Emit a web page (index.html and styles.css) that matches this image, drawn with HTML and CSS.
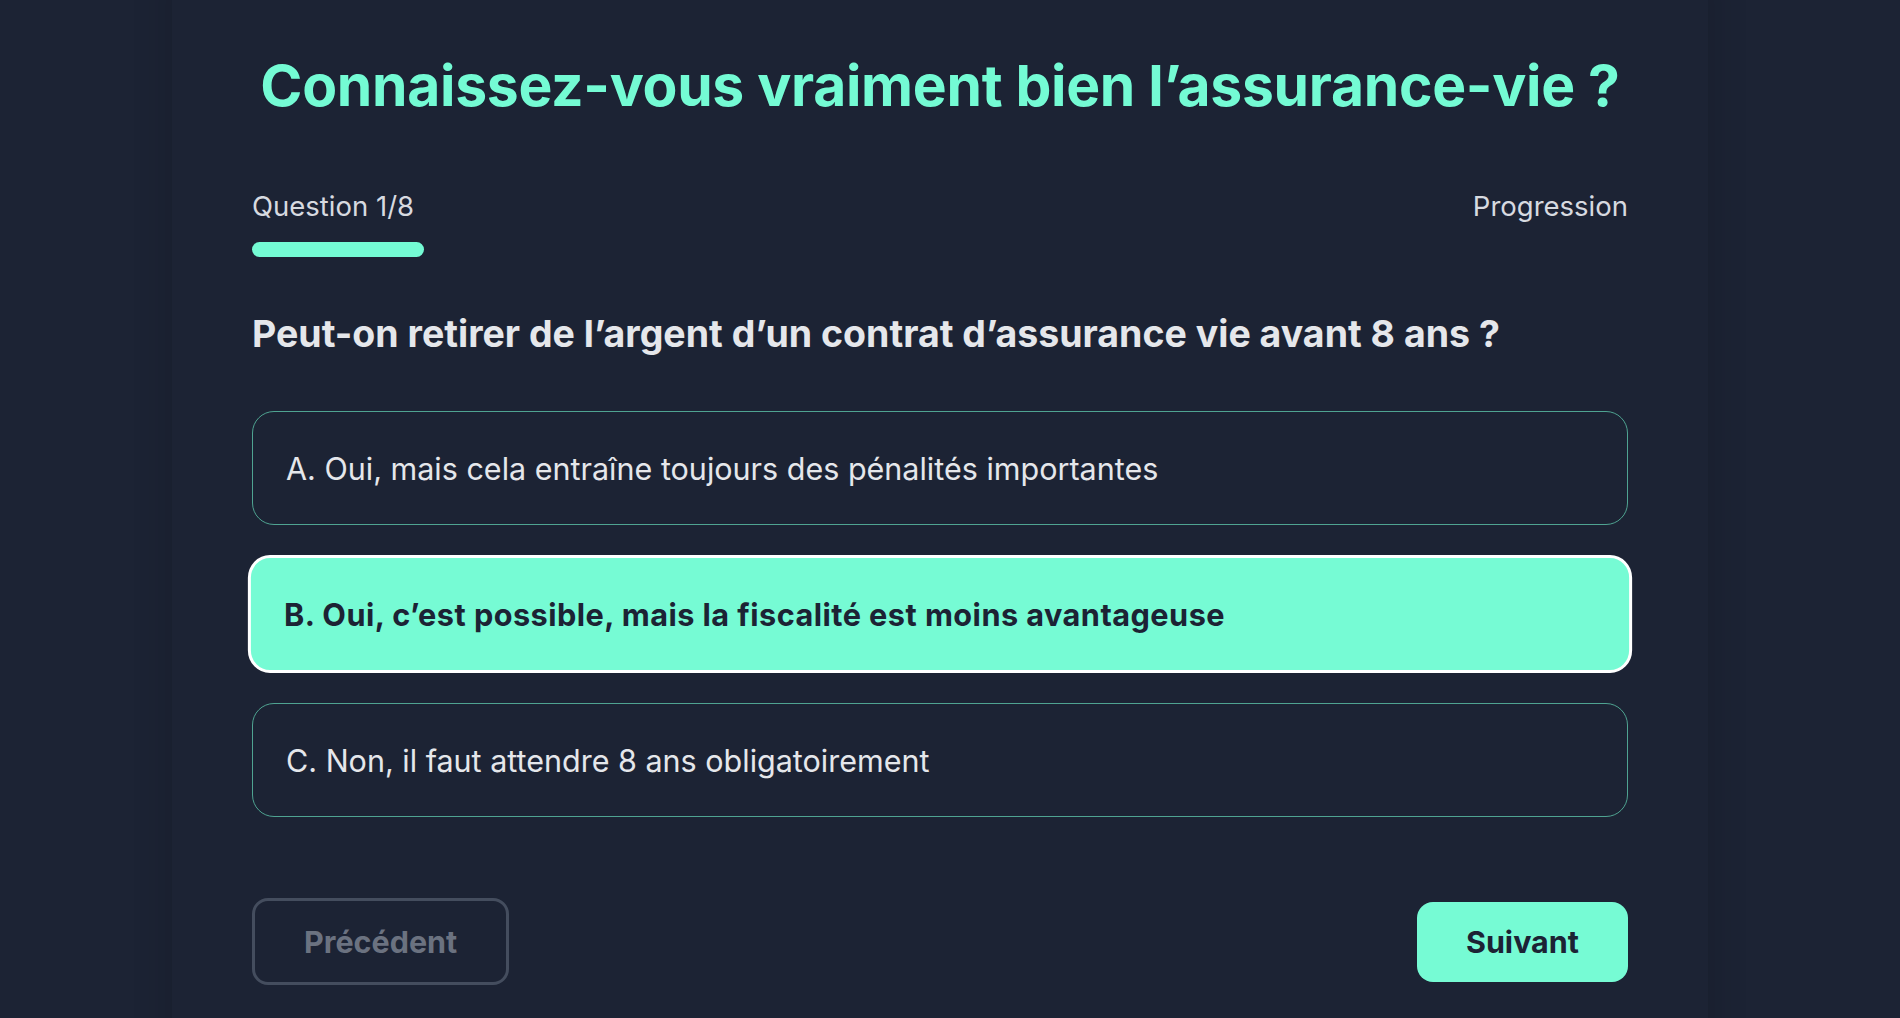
FILE: index.html
```html
<html>
  <head>
    <link rel="stylesheet" href="styles.css">
  </head>
  <body>
    <div class="card">
      <h1>Connaissez-vous vraiment bien l’assurance-vie ?</h1>
      <div class="progress">
        <div class="progress-head">
          <span>Question 1/8</span>
          <span>Progression</span>
        </div>
        <div class="track"><div class="fill" style="width: 12.5%"></div></div>
      </div>
      <h2>Peut-on retirer de l’argent d’un contrat d’assurance vie avant 8 ans ?</h2>
      <div class="options">
        <button class="option">A. Oui, mais cela entraîne toujours des pénalités importantes</button>
        <button class="option selected">B. Oui, c’est possible, mais la fiscalité est moins avantageuse</button>
        <button class="option">C. Non, il faut attendre 8 ans obligatoirement</button>
      </div>
      <div class="nav">
        <button class="prev" disabled>Précédent</button>
        <button class="next">Suivant</button>
      </div>
    </div>
  </body>
</html>
```

FILE: styles.css
```css
*{
  margin: 0;
  padding: 0;
  box-sizing: border-box;
}
body{
  background: #1c2334;
  color: #e5e7eb;
  font-family: Inter, "Noto Sans", sans-serif;
  height: 1018px;
  overflow: hidden;
}
.card{
  width: 1536px;
  margin: -40px 0 0 172px;
  padding: 91px 80px 0;
  height: 1200px;
  background: #1c2334;
  box-shadow: 0 0 40px rgba(0,0,0,0.16);
  border-radius: 24px;
}
h1{
  color: #74fbd4;
  font-size: 57px;
  font-weight: 700;
  line-height: 70px;
  text-align: center;
  letter-spacing: -0.3px;
}
.progress{
  margin-top: 68px;
}
.progress-head{
  display: flex;
  justify-content: space-between;
  font-size: 27.5px;
  line-height: 34px;
  color: #d7dae0;
}
.track{
  margin-top: 19px;
  height: 15px;
  border-radius: 8px;
}
.fill{
  height: 100%;
  background: #74fbd4;
  border-radius: 8px;
}
h2{
  margin-top: 54px;
  font-size: 37.5px;
  font-weight: 700;
  line-height: 46px;
  color: #e5e7eb;
}
.options{
  margin-top: 54px;
  display: flex;
  flex-direction: column;
  gap: 32px;
}
.option{
  height: 114px;
  padding: 0 33px;
  text-align: left;
  font-family: inherit;
  font-size: 30.5px;
  color: #e5e7eb;
  background: #1c2334;
  border: 1.5px solid #4fa391;
  border-radius: 22px;
}
.option.selected{
  background: #76fbd4;
  color: #1c2334;
  font-weight: 700;
  letter-spacing: 0.45px;
  border: 3px solid #fff;
  transform: scale(1.006, 1.035);
}
.nav{
  margin-top: 81px;
  display: flex;
  justify-content: space-between;
  align-items: center;
}
.nav button{
  font-family: inherit;
  font-size: 30.5px;
  font-weight: 700;
  height: 80px;
  padding: 0 49px;
  border-radius: 16px;
  border: none;
}
.prev{
  height: 87px !important;
  background: transparent;
  border: 3.5px solid #444d5e !important;
  color: #6b7280;
}
.next{
  background: #76fbd4;
  color: #1c2334;
}
```
